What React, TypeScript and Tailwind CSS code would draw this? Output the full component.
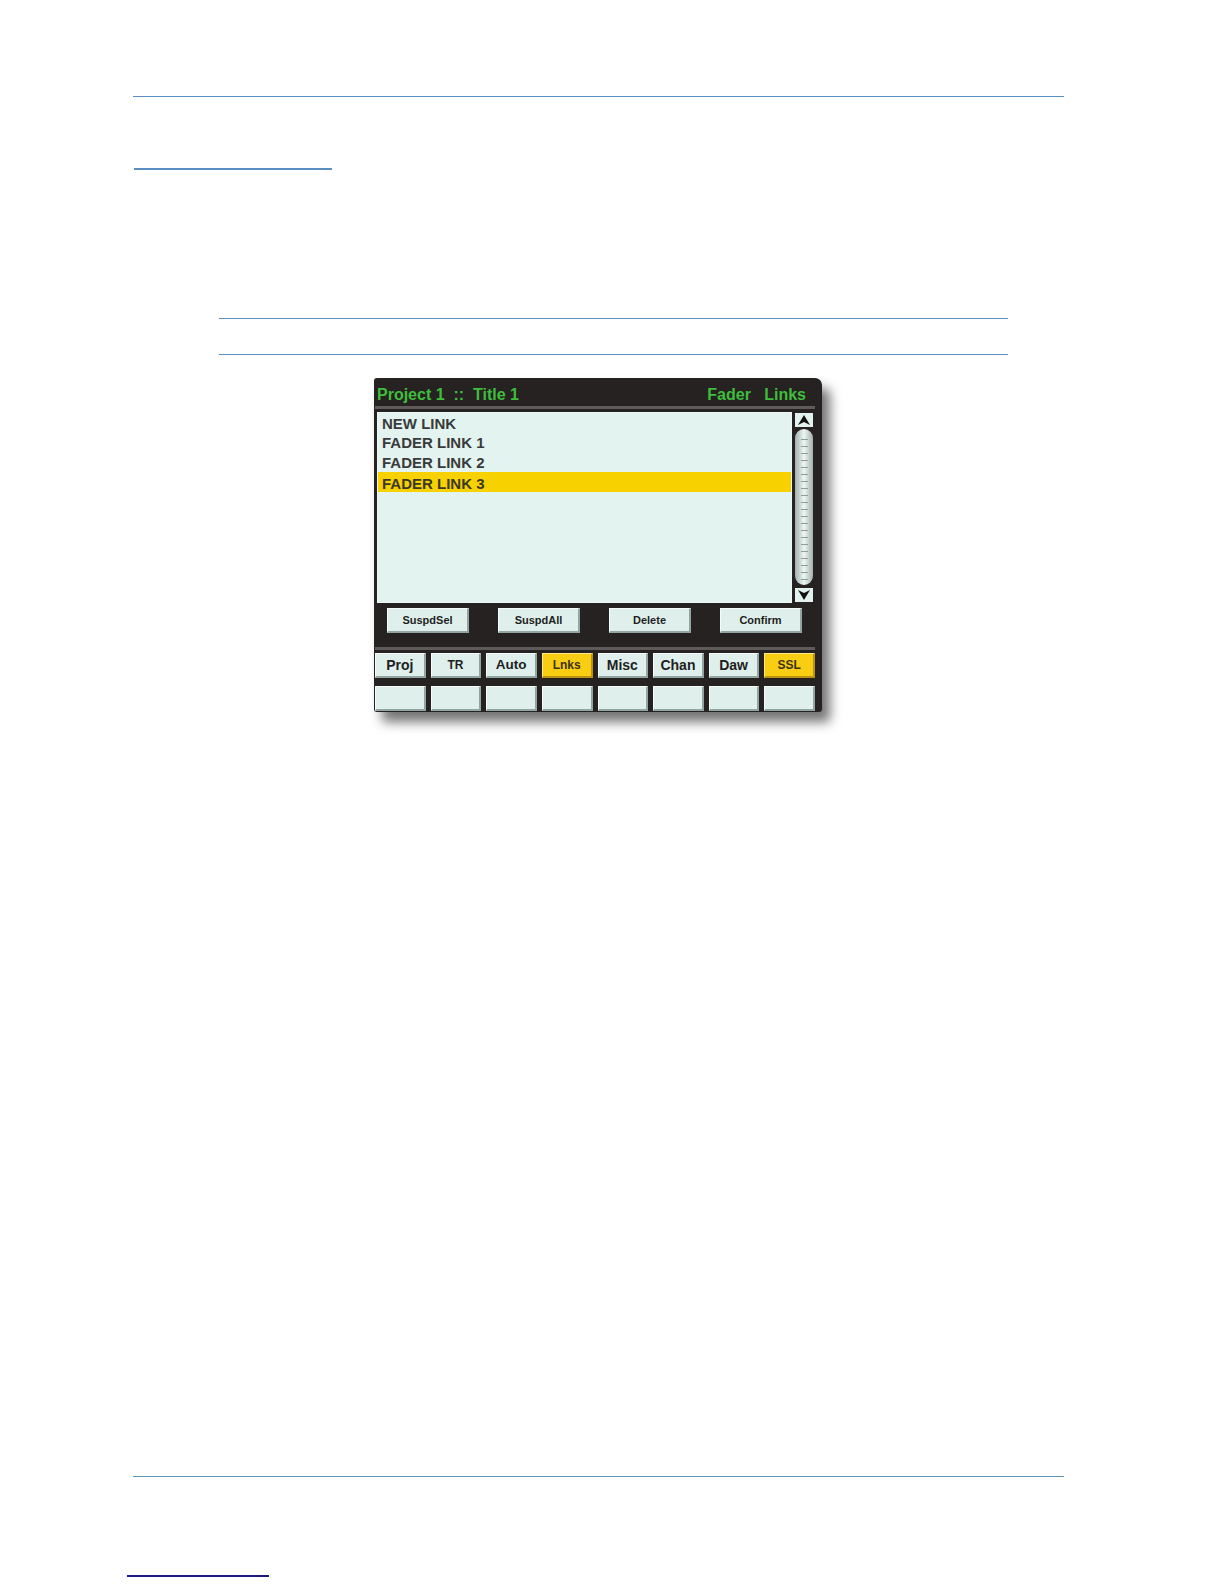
import React from "react";

const ticks = Array.from({ length: 21 }, (_, i) => i);
const tabs = [
  { label: "Proj", size: "text-[14px]", active: false },
  { label: "TR", size: "text-[12px]", active: false },
  { label: "Auto", size: "text-[13.5px]", active: false },
  { label: "Lnks", size: "text-[12px]", active: true },
  { label: "Misc", size: "text-[14px]", active: false },
  { label: "Chan", size: "text-[14px]", active: false },
  { label: "Daw", size: "text-[14px]", active: false },
  { label: "SSL", size: "text-[12px]", active: true },
];

function Bevel({ children, yellow = false, className = "" }: { children?: React.ReactNode; yellow?: boolean; className?: string }) {
  return (
    <div
      className={
        "flex items-center justify-center border-t border-l border-b-2 border-r-2 " +
        (yellow
          ? "bg-[#f8cd12] border-t-[#fde98a] border-l-[#fde98a] border-b-[#b89410] border-r-[#b89410] "
          : "bg-[#dff0ec] border-t-[#f6fcfb] border-l-[#f6fcfb] border-b-[#93a5a2] border-r-[#93a5a2] ") +
        className
      }
    >
      {children}
    </div>
  );
}

function Arrow({ up }: { up: boolean }) {
  return (
    <div className="h-[14px] w-[18px] bg-[#e4f2ef] flex items-center justify-center">
      <svg width="14" height="12" viewBox="0 0 14 12">
        {up ? (
          <path d="M1 11 L7 1 L13 11 L7 8 Z" fill="#111" />
        ) : (
          <path d="M1 1 L7 11 L13 1 L7 4 Z" fill="#111" />
        )}
      </svg>
    </div>
  );
}

export default function App() {
  return (
    <div className="w-[1224px] h-[1584px] bg-white overflow-hidden" style={{ fontFamily: '"Liberation Sans", Arial, sans-serif' }}>
      <div className="pt-[96px]">
        <div className="ml-[133px] w-[931px] h-px bg-[#5b8fc3]" />
        <div className="ml-[134px] mt-[71px] w-[198px] h-[2px] bg-[#5b8fc3]" />
        <div className="ml-[219px] mt-[148px] w-[789px] h-px bg-[#5b8fc3]" />
        <div className="ml-[219px] mt-[35px] w-[789px] h-px bg-[#5b8fc3]" />

        {/* Panel */}
        <div className="ml-[374px] mt-[23px] w-[448px] h-[334px] bg-[#262222] rounded-[3px] rounded-tr-[7px] pl-[1px] pr-[7px] shadow-[8px_10px_12px_rgba(0,0,0,0.55)]">
          <div className="h-[28px] pt-[8px] pl-[2px] pr-[9px] flex justify-between leading-[18px] text-[16px] font-bold text-[#3fbd3c] whitespace-pre">
            <span>Project 1  ::  Title 1</span>
            <span>Fader   Links</span>
          </div>
          <div className="h-[3px] bg-[#5f5b5b]" />
          <div className="mt-[3px] flex h-[191px]">
            <div className="ml-[2px] w-[415px] h-[191px] bg-[#e2f3f0] border border-[#eef8f6] pt-[0.5px]">
              {["NEW LINK", "FADER LINK 1", "FADER LINK 2"].map((t) => (
                <div key={t} className="h-[19.5px] leading-[19.5px] pl-[4px] text-[15px] font-bold text-[#3a3a3a]">
                  {t}
                </div>
              ))}
              <div className="h-[20px] pt-[4px] leading-[16px] pl-[4px] text-[15px] font-bold text-[#3b3826] bg-[#f7d100]">
                FADER LINK 3
              </div>
            </div>
            <div className="ml-[3px] w-[18px] pt-[1px] pb-[1px] flex flex-col justify-between">
              <Arrow up />
              <div className="h-[156px] -mt-[2px] rounded-full bg-gradient-to-r from-[#a3b1ae] via-[#eef6f4] to-[#a3b1ae] flex flex-col items-center pt-[10px] gap-[6px]">
                {ticks.map((i) => (
                  <div key={i} className="w-[7px] h-px bg-[#8e9c9a]" />
                ))}
              </div>
              <Arrow up={false} />
            </div>
          </div>
          <div className="mt-[5px] flex pl-[12px] gap-[29px]">
            {["SuspdSel", "SuspdAll", "Delete", "Confirm"].map((b) => (
              <Bevel key={b} className="w-[82px] h-[25px] text-[11px] font-bold text-[#1e1e1e]">
                {b}
              </Bevel>
            ))}
          </div>
          <div className="mt-[14px] h-[3px] bg-[#5f5b5b]" />
          <div className="mt-[3px] grid grid-cols-8 gap-[5px]">
            {tabs.map((t) => (
              <Bevel key={t.label} yellow={t.active} className={"h-[25px] font-bold " + t.size + (t.active ? " text-[#3d3212]" : " text-[#1e1e1e]")}>
                {t.label}
              </Bevel>
            ))}
          </div>
          <div className="mt-[8px] grid grid-cols-8 gap-[5px]">
            {tabs.map((t) => (
              <Bevel key={t.label} className="h-[25px]" />
            ))}
          </div>
        </div>

        <div className="ml-[133px] mt-[764px] w-[931px] h-px bg-[#5e96bd]" />
        <div className="ml-[127px] mt-[98px] w-[142px] h-[2px] bg-[#1b1b7e]" />
      </div>
    </div>
  );
}
